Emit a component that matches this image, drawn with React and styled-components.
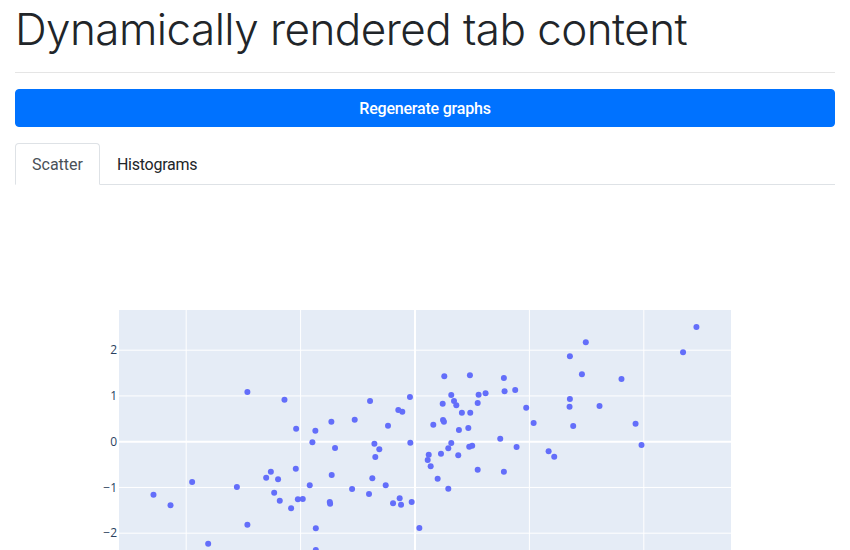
import React from "react";
import styled, { createGlobalStyle } from "styled-components";

const GlobalStyle = createGlobalStyle`
  html, body { margin: 0; padding: 0; background: #fff; }
  body {
    font-family: Roboto, "Liberation Sans", sans-serif;
    font-size: 16px;
    line-height: 1.5;
    color: #212529;
    overflow: hidden;
  }
  * { box-sizing: border-box; }
`;

const Page = styled.div`
  padding: 0 15px;
  width: 850px;
`;

const Title = styled.h1`
  margin: 0 0 1px;
  padding-top: 3px;
  font-family: Inter, Roboto, sans-serif;
  font-weight: 300;
  font-size: 44px;
  line-height: 53px;
  color: #212529;
  letter-spacing: -0.55px;
`;

const Divider = styled.hr`
  margin: 16px 0;
  border: 0;
  border-top: 1px solid rgba(0, 0, 0, 0.1);
`;

const PrimaryButton = styled.button`
  display: block;
  width: 100%;
  height: 38px;
  margin: 0 0 16px;
  padding: 7px 12px 5px;
  border: 1px solid #0072ff;
  border-radius: 4px;
  background: #0072ff;
  color: #fff;
  font-family: Roboto, "Liberation Sans", sans-serif;
  font-size: 16px;
  font-weight: 500;
  line-height: 24px;
  letter-spacing: -0.2px;
  text-align: center;
  cursor: pointer;
`;

const TabList = styled.ul`
  display: flex;
  margin: 0;
  padding: 0;
  list-style: none;
  border-bottom: 1px solid #dee2e6;
`;

const TabItem = styled.li`
  margin-bottom: -1px;
  padding: 9px 16px 7px;
  line-height: 24px;
  font-size: 16px;
  letter-spacing: ${(p) => (p.$active ? "0" : "-0.25px")};
  border: 1px solid ${(p) => (p.$active ? "#dee2e6" : "transparent")};
  border-bottom-color: ${(p) => (p.$active ? "#fff" : "transparent")};
  border-radius: 4px 4px 0 0;
  background: ${(p) => (p.$active ? "#fff" : "transparent")};
  color: ${(p) => (p.$active ? "#495057" : "#212529")};
  cursor: pointer;
`;

const TabContent = styled.div`
  padding: 24px;
`;

const ChartBox = styled.div`
  width: 772px;
  height: 450px;
`;

const TickLabel = styled.text`
  font-family: "Open Sans", sans-serif;
  font-size: 12px;
  fill: #2a3f5f;
`;

const points = [
  [-1.465, 1.086], [-1.141, 0.918], [-1.039, 0.284], [-0.871, 0.24], [-0.731, 0.437],
  [-0.527, 0.481], [-0.393, 0.89], [-0.897, -0.013], [-0.699, -0.138], [-0.355, -0.044],
  [-0.312, -0.166], [-0.347, -0.334], [-1.042, -0.59], [-1.26, -0.656], [-1.301, -0.787],
  [-1.197, -0.822], [-0.728, -0.728], [-0.373, -0.8], [-1.948, -0.881], [-1.557, -0.99],
  [-0.92, -0.953], [-0.55, -1.034], [-2.286, -1.158], [-1.231, -1.115], [-0.402, -1.143],
  [-2.137, -1.39], [-1.182, -1.29], [-1.024, -1.259], [-0.981, -1.252], [-0.745, -1.318],
  [-0.742, -1.355], [-1.083, -1.456], [-1.465, -1.814], [-0.867, -1.893], [-1.808, -2.23],
  [-0.867, -2.367],
  [2.46, 2.507], [1.493, 2.173], [2.343, 1.954], [1.354, 1.867], [0.256, 1.43],
  [0.48, 1.451], [0.777, 1.392], [1.459, 1.473], [1.805, 1.37], [0.783, 1.102],
  [0.876, 1.13], [0.556, 1.027], [0.617, 1.058], [0.317, 1.021], [-0.044, 0.977],
  [0.341, 0.89], [0.361, 0.796], [0.242, 0.831], [0.548, 0.846], [1.354, 0.933],
  [0.972, 0.743], [1.351, 0.765], [1.613, 0.78], [-0.146, 0.693], [-0.111, 0.656],
  [0.41, 0.634], [0.483, 0.634], [-0.236, 0.35], [0.16, 0.372], [0.245, 0.474],
  [0.253, 0.437], [0.384, 0.256], [0.466, 0.299], [1.037, 0.409], [1.383, 0.343],
  [1.928, 0.393], [-0.041, -0.022], [0.317, -0.028], [0.745, 0.066], [1.98, -0.072],
  [0.291, -0.144], [0.474, -0.109], [0.5, -0.087], [0.888, -0.116], [0.12, -0.284],
  [0.111, -0.4], [0.227, -0.262], [0.378, -0.297], [0.137, -0.538], [1.168, -0.21],
  [1.217, -0.328], [0.548, -0.612], [0.777, -0.656], [0.198, -0.809], [0.291, -1.027],
  [-0.256, -0.953], [-0.192, -1.346], [-0.134, -1.237], [-0.122, -1.377], [-0.029, -1.318],
  [0.038, -1.886],
];

const PLOT = { left: 80, top: 101, width: 612, height: 270 };
const X0 = 376;
const Y0 = 232.7;
const XS = 114.4;
const YS = 45.75;
const sx = (v) => X0 + v * XS;
const sy = (v) => Y0 - v * YS;

function ScatterChart() {
  const ticks = [-2, -1, 0, 1, 2];
  return (
    <ChartBox>
      <svg width="772" height="450" viewBox="0 0 772 450">
        <rect x={PLOT.left} y={PLOT.top} width={PLOT.width} height={PLOT.height} fill="#e5ecf6" />
        {ticks.filter((t) => t !== 0).map((t) => (
          <line key={"vx" + t} x1={sx(t)} x2={sx(t)} y1={PLOT.top} y2={PLOT.top + PLOT.height} stroke="#fff" strokeWidth="1" />
        ))}
        {ticks.filter((t) => t !== 0).map((t) => (
          <line key={"hy" + t} x1={PLOT.left} x2={PLOT.left + PLOT.width} y1={sy(t)} y2={sy(t)} stroke="#fff" strokeWidth="1" />
        ))}
        <line x1={sx(0)} x2={sx(0)} y1={PLOT.top} y2={PLOT.top + PLOT.height} stroke="#fff" strokeWidth="2" />
        <line x1={PLOT.left} x2={PLOT.left + PLOT.width} y1={sy(0)} y2={sy(0)} stroke="#fff" strokeWidth="2" />
        {points.map(([x, y], i) => (
          <circle key={i} cx={sx(x)} cy={sy(y)} r="3" fill="#636efa" />
        ))}
        {ticks.map((t) => (
          <TickLabel key={"ly" + t} x={PLOT.left - 2} y={sy(t) + 4.2} textAnchor="end">
            {t < 0 ? "\u2212" + Math.abs(t) : String(t)}
          </TickLabel>
        ))}
      </svg>
    </ChartBox>
  );
}

export default function App() {
  return (
    <>
      <GlobalStyle />
      <Page>
        <Title>Dynamically rendered tab content</Title>
        <Divider />
        <PrimaryButton>Regenerate graphs</PrimaryButton>
        <TabList>
          <TabItem $active>Scatter</TabItem>
          <TabItem>Histograms</TabItem>
        </TabList>
        <TabContent>
          <ScatterChart />
        </TabContent>
      </Page>
    </>
  );
}
